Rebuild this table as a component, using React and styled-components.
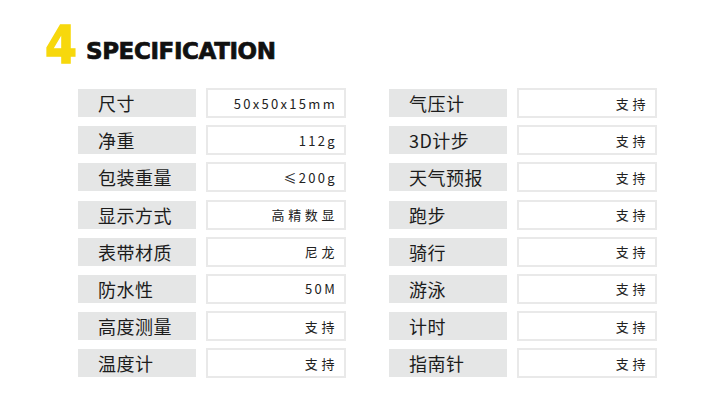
import React from 'react';
import styled, { createGlobalStyle } from 'styled-components';

const GlobalStyle = createGlobalStyle`
  html, body {
    margin: 0;
    padding: 0;
    background: #fff;
  }
  * {
    box-sizing: border-box;
  }
`;

const Page = styled.div`
  width: 720px;
  height: 410px;
  padding: 24px 0 0 45px;
  background: #fff;
  font-family: "Noto Sans CJK SC", "Noto Sans", sans-serif;
`;

const Title = styled.div`
  display: flex;
  align-items: flex-end;
  gap: 10px;
  height: 44px;
`;

const Num = styled.span`
  font-family: "DejaVu Sans", sans-serif;
  font-weight: 700;
  font-size: 51px;
  line-height: 44px;
  color: #f7d80c;
  -webkit-text-stroke: 1.5px #f7d80c;
  display: inline-block;
  transform: scaleX(0.9);
  transform-origin: left bottom;
  width: 31px;
`;

const Heading = styled.h1`
  margin: 0 0 4px 0;
  font-family: "DejaVu Sans", sans-serif;
  font-weight: 700;
  font-size: 23px;
  line-height: 26px;
  letter-spacing: -0.4px;
  color: #111;
  -webkit-text-stroke: 0.7px #111;
`;

const Tables = styled.div`
  display: flex;
  gap: 43px;
  margin: 20px 0 0 33px;
`;

const Table = styled.div`
  display: grid;
  grid-template-columns: 118px 140px;
  grid-auto-rows: 30px;
  column-gap: 10px;
  row-gap: 7.2px;
`;

const Label = styled.div`
  background: #e5e6e6;
  margin: 1px 0;
  display: flex;
  align-items: center;
  padding-left: 20px;
  font-size: 18px;
  letter-spacing: 0.5px;
  color: #1c1c1c;
`;

const Value = styled.div`
  border: 2px solid #e9e9e9;
  background: #fff;
  display: flex;
  align-items: center;
  justify-content: flex-end;
  padding-right: ${p => (p.$wide ? '6px' : '7px')};
  font-size: 13px;
  letter-spacing: ${p => (p.$wide ? '3.6px' : '2.3px')};
  color: #222;
`;

const left = [
  ['尺寸', '50x50x15mm'],
  ['净重', '112g'],
  ['包装重量', '≤200g'],
  ['显示方式', '高精数显'],
  ['表带材质', '尼龙'],
  ['防水性', '50M'],
  ['高度测量', '支持'],
  ['温度计', '支持'],
];

const right = [
  ['气压计', '支持'],
  ['3D计步', '支持'],
  ['天气预报', '支持'],
  ['跑步', '支持'],
  ['骑行', '支持'],
  ['游泳', '支持'],
  ['计时', '支持'],
  ['指南针', '支持'],
];

const isCjk = s => /[\u4e00-\u9fff]/.test(s);

function SpecTable({ rows }) {
  return (
    <Table>
      {rows.map(([k, v]) => (
        <React.Fragment key={k}>
          <Label>{k}</Label>
          <Value $wide={isCjk(v)}>{v}</Value>
        </React.Fragment>
      ))}
    </Table>
  );
}

export default function App() {
  return (
    <>
      <GlobalStyle />
      <Page>
        <Title>
          <Num>4</Num>
          <Heading>SPECIFICATION</Heading>
        </Title>
        <Tables>
          <SpecTable rows={left} />
          <SpecTable rows={right} />
        </Tables>
      </Page>
    </>
  );
}
